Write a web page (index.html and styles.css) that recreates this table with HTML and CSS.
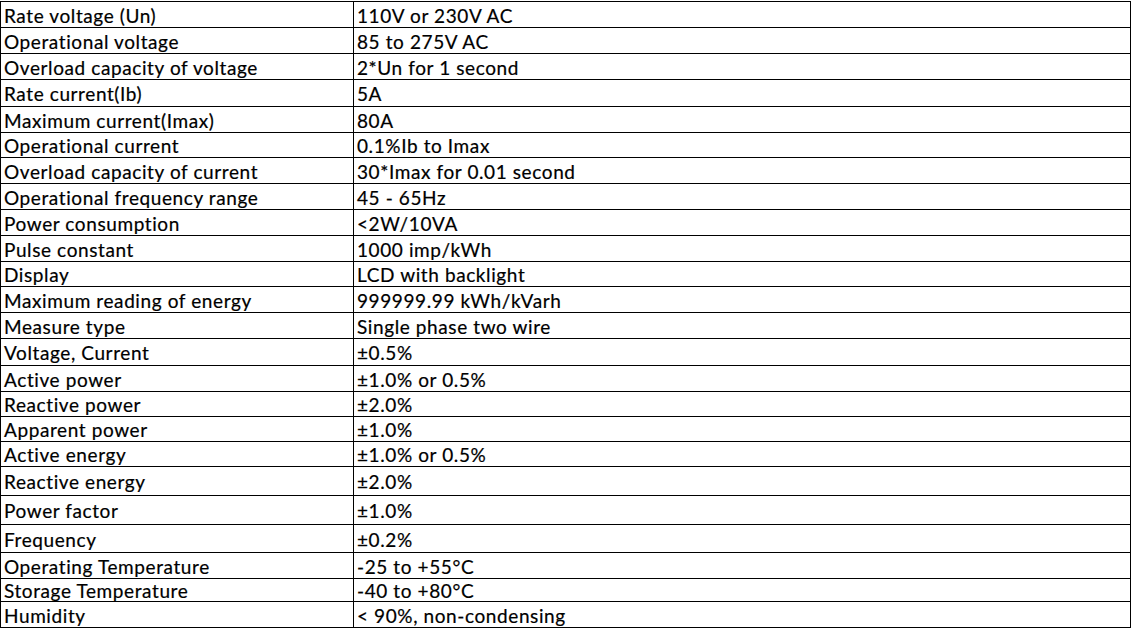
FILE: index.html
```html
<!DOCTYPE html>
<html>
<head>
<meta charset="utf-8">
<link rel="stylesheet" href="styles.css">
</head>
<body>
<table class="spec">
<colgroup><col class="c1"><col class="c2"></colgroup>
<tbody>
<tr class="h26"><td>Rate voltage (Un)</td><td>110V or 230V AC</td></tr>
<tr class="h26"><td>Operational voltage</td><td>85 to 275V AC</td></tr>
<tr class="h26"><td>Overload capacity of voltage</td><td>2*Un for 1 second</td></tr>
<tr class="h27"><td>Rate current(Ib)</td><td>5A</td></tr>
<tr class="h26"><td>Maximum current(Imax)</td><td>80A</td></tr>
<tr class="h25"><td>Operational current</td><td>0.1%Ib to Imax</td></tr>
<tr class="h26"><td>Overload capacity of current</td><td>30*Imax for 0.01 second</td></tr>
<tr class="h26"><td>Operational frequency range</td><td>45 - 65Hz</td></tr>
<tr class="h26"><td>Power consumption</td><td>&lt;2W/10VA</td></tr>
<tr class="h26"><td>Pulse constant</td><td>1000 imp/kWh</td></tr>
<tr class="h25"><td>Display</td><td>LCD with backlight</td></tr>
<tr class="h26"><td>Maximum reading of energy</td><td>999999.99 kWh/kVarh</td></tr>
<tr class="h26"><td>Measure type</td><td>Single phase two wire</td></tr>
<tr class="h27"><td>Voltage, Current</td><td>±0.5%</td></tr>
<tr class="h26"><td>Active power</td><td>±1.0% or 0.5%</td></tr>
<tr class="h25"><td>Reactive power</td><td>±2.0%</td></tr>
<tr class="h25"><td>Apparent power</td><td>±1.0%</td></tr>
<tr class="h25"><td>Active energy</td><td>±1.0% or 0.5%</td></tr>
<tr class="h29"><td>Reactive energy</td><td>±2.0%</td></tr>
<tr class="h29"><td>Power factor</td><td>±1.0%</td></tr>
<tr class="h28"><td>Frequency</td><td>±0.2%</td></tr>
<tr class="h26"><td>Operating Temperature</td><td>-25 to +55°C</td></tr>
<tr class="h23"><td>Storage Temperature</td><td>-40 to +80°C</td></tr>
<tr class="h26"><td>Humidity</td><td>&lt; 90%, non-condensing</td></tr>
</tbody>
</table>
</body>
</html>
```
FILE: styles.css
```css
html, body {
  margin: 0;
  padding: 0;
  background: #ffffff;
}

body {
  padding-top: 1px;
}

.spec {
  border-collapse: collapse;
  table-layout: fixed;
  width: 1130px;
  font-family: Lato, "Open Sans", sans-serif;
  font-size: 19px;
  letter-spacing: 0.6px;
  color: #000;
  -webkit-text-stroke: 0.2px #000;
}

.c1 { width: 353px; }
.c2 { width: 777px; }

.spec td {
  border: 1px solid #000;
  padding: 2px 0 0 3px;
  line-height: 20px;
  vertical-align: middle;
  white-space: nowrap;
  overflow: hidden;
}

.h23 td { height: 20px; }
.h25 td { height: 22px; }
.h26 td { height: 23px; }
.h27 td { height: 24px; }
.h28 td { height: 25px; }
.h29 td { height: 26px; }
```
